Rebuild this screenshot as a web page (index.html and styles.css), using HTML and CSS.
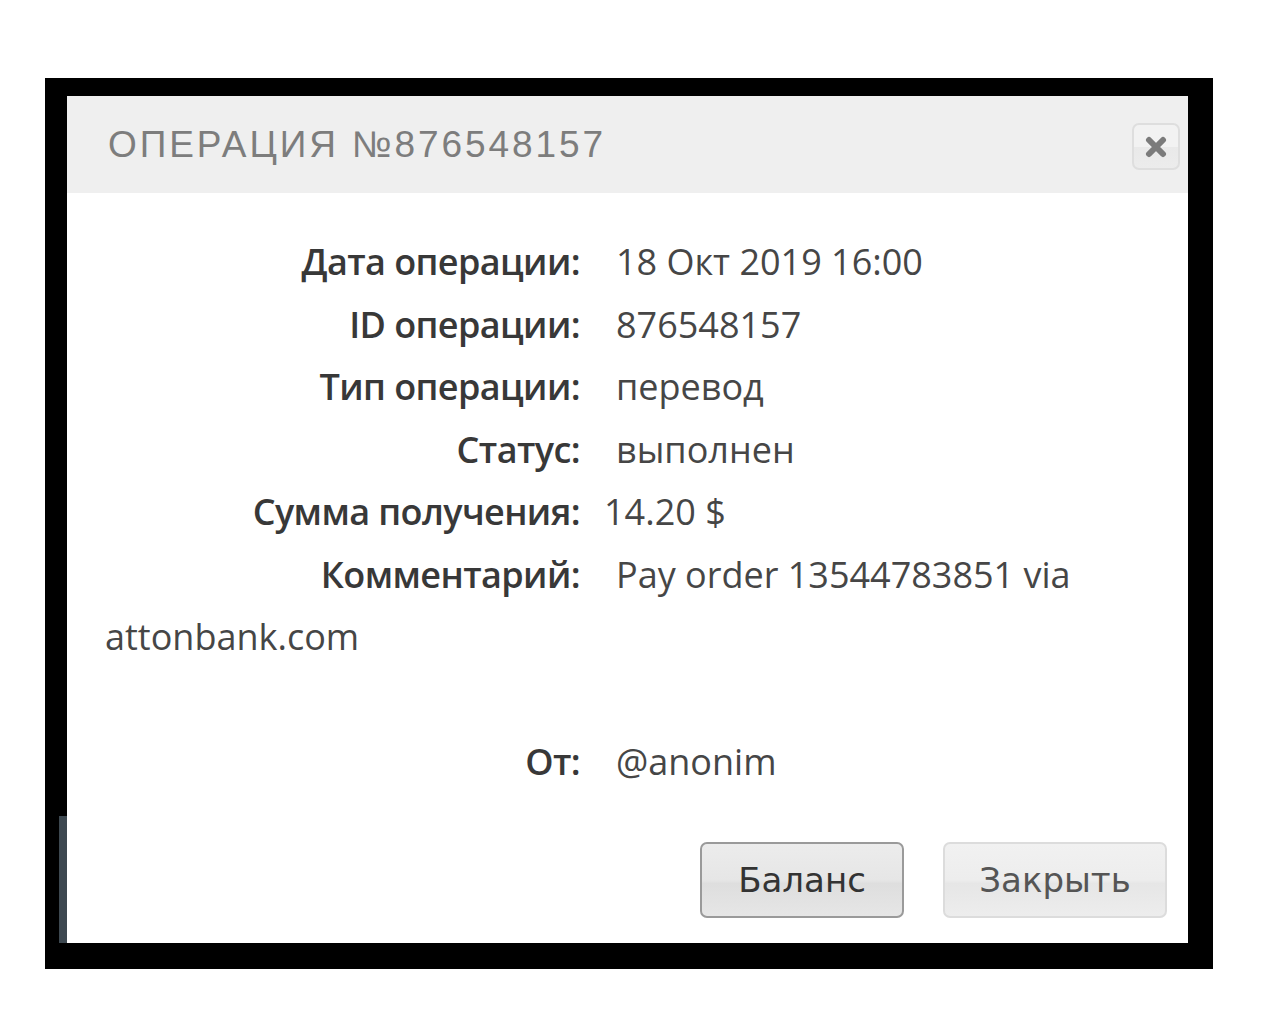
FILE: index.html
```html
<!DOCTYPE html>
<html lang="ru">
<head>
<meta charset="utf-8">
<title>Операция №876548157</title>
<link rel="stylesheet" href="styles.css">
</head>
<body>
<div class="frame">
  <div class="dialog">
    <div class="dialog-header">
      <h1 class="dialog-title">ОПЕРАЦИЯ №876548157</h1>
      <button class="close-btn" type="button" aria-label="Закрыть">
        <svg width="22" height="22" viewBox="0 0 22 22"><path d="M4 4 L18 18 M18 4 L4 18" stroke="#7b7b7b" stroke-width="6" stroke-linecap="round"/></svg>
      </button>
    </div>
    <div class="dialog-body">
      <div class="row"><span class="label">Дата операции:</span><span class="value">18 Окт 2019 16:00</span></div>
      <div class="row"><span class="label">ID операции:</span><span class="value">876548157</span></div>
      <div class="row"><span class="label">Тип операции:</span><span class="value">перевод</span></div>
      <div class="row"><span class="label">Статус:</span><span class="value">выполнен</span></div>
      <div class="row"><span class="label label-tight">Сумма получения:</span><span class="value">14.20 $</span></div>
      <div class="row"><span class="label">Комментарий:</span><span class="value">Pay order 13544783851 via</span></div>
      <div class="row"><span class="value">attonbank.com</span></div>
      <div class="row row-empty"></div>
      <div class="row"><span class="label">От:</span><span class="value">@anonim</span></div>
    </div>
    <div class="dialog-footer">
      <button class="btn btn-primary" type="button">Баланс</button>
      <button class="btn btn-secondary" type="button">Закрыть</button>
    </div>
  </div>
</div>
</body>
</html>
```
FILE: styles.css
```css
html, body {
  margin: 0;
  padding: 0;
  background: #ffffff;
}

body {
  padding: 78px 0 0 45px;
  font-family: "Open Sans", "Liberation Sans", sans-serif;
}

.frame {
  position: relative;
  width: 1168px;
  height: 891px;
  box-sizing: border-box;
  background: #000;
  padding: 18px 25px 26px 22px;
}

.frame::before {
  content: "";
  position: absolute;
  left: 14px;
  top: 738px;
  width: 8px;
  height: 127px;
  background: #3d4850;
}

.dialog {
  width: 1121px;
  height: 847px;
  background: #fff;
  display: flex;
  flex-direction: column;
}

.dialog-header {
  height: 97px;
  background: #efefef;
  display: flex;
  align-items: center;
  justify-content: space-between;
  padding: 0 8px 0 41px;
}

.dialog-title {
  margin: 0;
  font-family: "Liberation Sans", sans-serif;
  font-weight: 400;
  font-size: 37px;
  letter-spacing: 2.9px;
  color: #7d7d7d;
}

.close-btn {
  width: 48px;
  height: 47px;
  margin-top: 4px;
  border: 2px solid #dedede;
  border-radius: 7px;
  background: linear-gradient(#f2f2f2 0%, #f2f2f2 50%, #e9e9e9 51%, #ececec 100%);
  display: flex;
  align-items: center;
  justify-content: center;
  padding: 0;
}

.dialog-body {
  padding: 38px 38px 0 38px;
  font-size: 36px;
  line-height: 62.5px;
  color: #464646;
}

.row {
  min-height: 62.5px;
}

.label {
  display: inline-block;
  width: 475px;
  text-align: right;
  font-weight: 600;
  color: #383838;
  margin-right: 36px;
  letter-spacing: -0.6px;
}

.label-tight {
  margin-right: 24px;
}

.dialog-footer {
  margin-top: 48px;
  display: flex;
  justify-content: flex-end;
  gap: 39px;
  padding-right: 21px;
}

.btn {
  height: 76px;
  border-radius: 7px;
  font-family: "DejaVu Sans", sans-serif;
  font-size: 34px;
  padding: 0;
}

.btn-primary {
  width: 204px;
  border: 2px solid #9a9a9a;
  background: linear-gradient(#ececec 0%, #e6e6e6 50%, #dedede 55%, #e6e6e6 100%);
  color: #333;
}

.btn-secondary {
  width: 224px;
  border: 2px solid #dcdcdc;
  background: linear-gradient(#f1f1f1 0%, #ededed 50%, #e6e6e6 55%, #ededed 100%);
  color: #555;
}
```
